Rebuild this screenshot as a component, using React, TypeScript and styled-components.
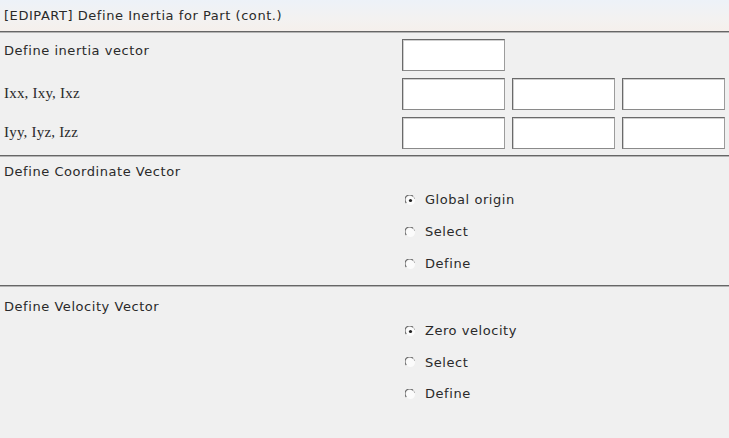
import styled, { createGlobalStyle } from "styled-components";

const GlobalStyle = createGlobalStyle`
	html, body {
		margin: 0;
		padding: 0;
		background: #f0f0f0;
	}
	body {
		font-family: "DejaVu Sans", "Liberation Sans", sans-serif;
		font-size: 13px;
		letter-spacing: 0.55px;
		color: #2a2a2a;
	}
`;

const Panel = styled.div`
	width: 729px;
	height: 438px;
	overflow: hidden;
	background: #f0f0f0;
	display: flex;
	flex-direction: column;
`;

const Header = styled.div`
	height: 31px;
	display: flex;
	align-items: center;
	padding-left: 4px;
	background: linear-gradient(#edf2f8, #f3f2f1 60%, #f5f0ec);
	border-bottom: 1px solid #666;
	box-shadow: 0 1px 0 #b4b4b4;
`;

const Section = styled.div<{ $last?: boolean }>`
	display: flex;
	flex-direction: column;
	border-bottom: ${(p) => (p.$last ? "none" : "1px solid #666")};
	box-shadow: ${(p) => (p.$last ? "none" : "0 1px 0 #b4b4b4")};
`;

const InertiaGrid = styled.div`
	display: grid;
	grid-template-columns: 391px 103px 103px 103px;
	column-gap: 7px;
	row-gap: 7px;
	padding: 7px 0 6px 4px;
	align-items: center;
`;

const Label = styled.div<{ $serif?: boolean; $raise?: number }>`
	font-family: ${(p) =>
		p.$serif
			? '"Liberation Serif", "Times New Roman", serif'
			: '"DejaVu Sans", "Liberation Sans", sans-serif'};
	font-size: ${(p) => (p.$serif ? "15px" : "13px")};
	letter-spacing: ${(p) => (p.$serif ? "0.2px" : "0.55px")};
	margin-bottom: ${(p) => (p.$raise ?? 0) * 2}px;
`;

const Field = styled.div`
	height: 32px;
	box-sizing: border-box;
	background: #fff;
	border: 1px solid;
	border-color: #6a6a6a #9c9c9c #8a8a8a #6a6a6a;
	box-shadow: inset 1px 1px 0 #cfcfcf;
`;

const SectionTitle = styled.div<{ $top: number }>`
	padding: ${(p) => p.$top}px 0 0 4px;
	height: 16px;
	line-height: 16px;
`;

const RadioGroup = styled.div<{ $step: number; $top: number; $bottom: number }>`
	display: flex;
	flex-direction: column;
	padding-left: 405px;
	padding-top: ${(p) => p.$top}px;
	padding-bottom: ${(p) => p.$bottom}px;
	gap: ${(p) => p.$step - 16}px;
`;

const RadioRow = styled.label`
	display: flex;
	align-items: center;
	gap: 9px;
	height: 16px;
	line-height: 16px;
`;

function RadioMark({ checked }: { checked: boolean }) {
	return (
		<svg width="11" height="11" viewBox="0 0 11 11">
			<circle cx="5.5" cy="5.5" r="4.5" fill="#fbfbfb" />
			<path d="M1.3 8 A4.5 4.5 0 0 1 8 1.3" fill="none" stroke="#6a6a6a" strokeWidth="1.2" />
			<path d="M8 1.3 A4.5 4.5 0 0 1 9.7 4" fill="none" stroke="#b8b8b8" strokeWidth="1" />
			{checked && <circle cx="5.5" cy="5.5" r="1.6" fill="#222" />}
		</svg>
	);
}

interface RadioSet {
	title: string;
	options: string[];
	step: number;
	titleTop: number;
	radioTop: number;
	radioBottom: number;
}

const radioSets: RadioSet[] = [
	{
		title: "Define Coordinate Vector",
		options: ["Global origin", "Select", "Define"],
		step: 32,
		titleTop: 8,
		radioTop: 12,
		radioBottom: 13,
	},
	{
		title: "Define Velocity Vector",
		options: ["Zero velocity", "Select", "Define"],
		step: 31.5,
		titleTop: 13,
		radioTop: 8,
		radioBottom: 20,
	},
];

export default function App() {
	return (
		<>
			<GlobalStyle />
			<Panel>
				<Header>[EDIPART] Define Inertia for Part (cont.)</Header>
				<Section>
					<InertiaGrid>
						<Label $raise={5}>Define inertia vector</Label>
						<Field />
						<div />
						<div />
						<Label $serif $raise={1}>Ixx, Ixy, Ixz</Label>
						<Field />
						<Field />
						<Field />
						<Label $serif $raise={1}>Iyy, Iyz, Izz</Label>
						<Field />
						<Field />
						<Field />
					</InertiaGrid>
				</Section>
				{radioSets.map((set, i) => (
					<Section key={set.title} $last={i === radioSets.length - 1}>
						<SectionTitle $top={set.titleTop}>{set.title}</SectionTitle>
						<RadioGroup $step={set.step} $top={set.radioTop} $bottom={set.radioBottom}>
							{set.options.map((opt, j) => (
								<RadioRow key={opt}>
									<RadioMark checked={j === 0} />
									{opt}
								</RadioRow>
							))}
						</RadioGroup>
					</Section>
				))}
			</Panel>
		</>
	);
}
